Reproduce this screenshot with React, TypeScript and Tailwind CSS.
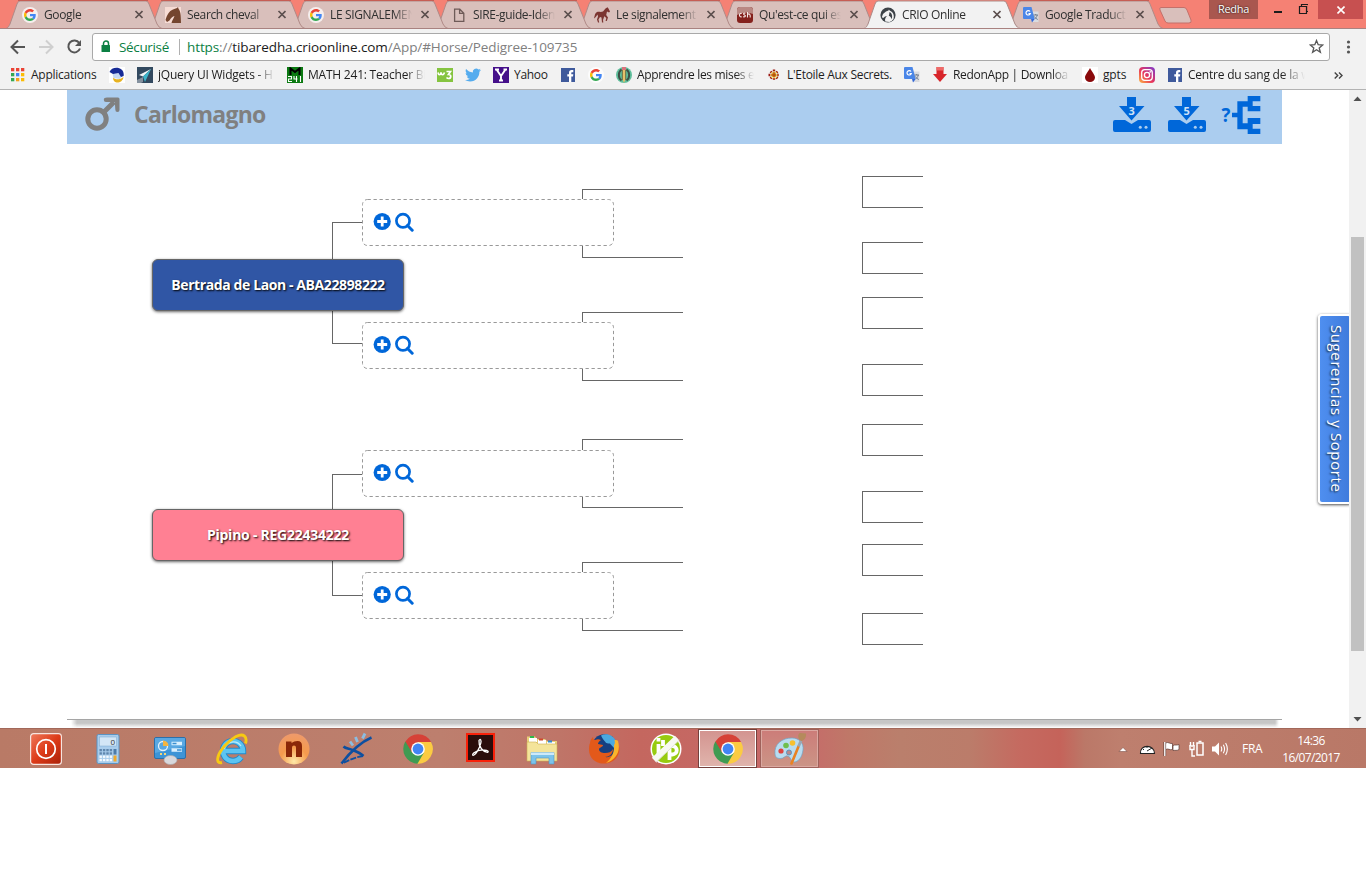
import React from 'react';

type P = { children?: React.ReactNode };

const Svg = ({ size = 16, box = '0 0 16 16', children }: P & { size?: number; box?: string }) => (
  <svg width={size} height={size} viewBox={box} className="block shrink-0">
    {children}
  </svg>
);

const GoogleIcon = () => (
  <Svg box="0 0 48 48">
    <circle cx="24" cy="24" r="24" fill="#fff" fillOpacity=".75" />
    <g transform="translate(6 6) scale(.75)">
      <path fill="#EA4335" d="M24 9.5c3.54 0 6.71 1.22 9.21 3.6l6.85-6.85C35.9 2.38 30.47 0 24 0 14.62 0 6.51 5.38 2.56 13.22l7.98 6.19C12.43 13.72 17.74 9.5 24 9.5z" />
      <path fill="#4285F4" d="M46.98 24.55c0-1.57-.15-3.09-.38-4.55H24v9.02h12.94c-.58 2.96-2.26 5.48-4.78 7.18l7.73 6c4.51-4.18 7.09-10.36 7.09-17.65z" />
      <path fill="#FBBC05" d="M10.53 28.59c-.48-1.45-.76-2.99-.76-4.59s.27-3.14.76-4.59l-7.98-6.19C.92 16.46 0 20.12 0 24s.92 7.54 2.56 10.78l7.97-6.19z" />
      <path fill="#34A853" d="M24 48c6.48 0 11.93-2.13 15.89-5.81l-7.73-6c-2.15 1.45-4.92 2.3-8.16 2.3-6.26 0-11.57-4.22-13.47-9.91l-7.98 6.19C6.51 42.62 14.62 48 24 48z" />
    </g>
  </Svg>
);

const HorseHeadIcon = () => (
  <Svg>
    <path fill="#f7dcd5" d="M0 0h16v16H0z" />
    <path fill="#74452f" d="M.5 13C2 8 4 4 8 2.500L12 1l1-1 .6 2C15.500 4 16 8 16 16H6.500C7 13 9 11 9.500 9 7.500 9.500 6 11 4.500 13.500L2 15z" />
  </Svg>
);
const PageIcon = () => (
  <Svg>
    <path fill="none" stroke="#6f5b58" strokeWidth="1.3" d="M3.6 2.2h5.2l4 4v8.2H3.6zM8.6 2.2v4.2h4" />
  </Svg>
);
const HorseIcon = () => (
  <Svg>
    <path
      fill="#7c3531"
      d="M11.500 1.500L13.500.3l.8 1L16 4.500l-1 1-2-1-.8 3.500 1.800 2.500-1.200 3.500h-1.200l.7-3-2-1.800L9 13l.3 2.500H8L7.500 10.500 6 10l-1.500 2.500.7 3H4L3 12.500 4 9.500 3.500 7.500C2.500 8.500 2 10.500 0 11.500.8 8 1 6 3 5c2-.5 4 .3 6-.5z"
    />
  </Svg>
);
const CshIcon = () => (
  <Svg>
    <rect width="16" height="16" rx="3" fill="#85211d" />
    <path fill="#b98883" d="M0 3Q0 0 3 0h10Q16 0 16 3v4Q8 3.500 0 8z" />
    <path fill="none" stroke="#f5e6e4" strokeWidth="1.100" d="M4.700 6.500C2 5.500 1.500 10.500 4.700 9.800M8.500 6.300c-2-.6-2.600.9-1 1.600s1 2.300-1.400 1.900M10.500 5v5.500M10.500 7.500c2-1.500 3 0 2.700 3" />
  </Svg>
);
const CrioIcon = () => (
  <Svg>
    <circle cx="8" cy="8" r="7.600" fill="#3c4247" />
    <path fill="#f2f2f2" d="M5.200 14.600C4.500 11.500 6 10 7.200 9L5 9.600 3.200 11l-1.400-.8L3 7 6 4.400l2.500-.8.4-1 1 1.100c3 1 4.800 4.300 3.600 8.300-1 1.600-2.500 2.500-4 2.900z" />
    <path fill="#3c4247" d="M9.500 5c2.300 1 3.300 4 2.200 7.200-.6-2-1.500-3-2.900-3.500l.4-1.500z" />
  </Svg>
);
const TranslateIcon = () => (
  <Svg>
    <path fill="#d9dbe0" d="M7 4.500h8.500V15H9z" />
    <path fill="#4a86e8" d="M1 0h7.500l3.200 12H1q-1 0-1-1V1q0-1 1-1z" />
    <path fill="#3367d6" d="M8 12h3.700L9 15.500z" />
    <path fill="none" stroke="#fff" strokeWidth="1.200" d="M7 4.500A2.200 2.200 0 1 0 7.300 6.500H5.500" />
    <path fill="none" stroke="#6b7686" strokeWidth=".9" d="M10.500 8h4.500M12.700 7v1M14.300 8c-.5 2-1.500 3-2.500 4M11.500 9.500c1 1.500 2 2.500 3.300 3" />
  </Svg>
);

const tabs: { title: string; icon: React.ReactNode; active?: boolean }[] = [
  { title: 'Google', icon: <GoogleIcon /> },
  { title: 'Search cheval', icon: <HorseHeadIcon /> },
  { title: 'LE SIGNALEMEN', icon: <GoogleIcon /> },
  { title: 'SIRE-guide-Iden', icon: <PageIcon /> },
  { title: 'Le signalement', icon: <HorseIcon /> },
  { title: "Qu'est-ce qui es", icon: <CshIcon /> },
  { title: 'CRIO Online', icon: <CrioIcon />, active: true },
  { title: 'Google Traduct', icon: <TranslateIcon /> },
];

const fade = '[mask-image:linear-gradient(to_right,#000_78%,transparent)]';

function Tab({ tab, z }: { tab: (typeof tabs)[number]; z: number }) {
  return (
    <div className="relative flex h-[29px] w-[143px] shrink-0 items-center pl-4" style={{ zIndex: tab.active ? 20 : z }}>
      <svg className="absolute top-0 left-0 overflow-visible" width="157" height="29">
        <path
          d="M0 28.500C2 28 3 26 4 24L11 4Q12 1 14 1H140Q142 1 143 4L151 24Q153 28 156 28.500Z"
          fill={tab.active ? '#f2f2f2' : '#d9bfbb'}
          stroke={tab.active ? '#ab8b88' : '#b08a87'}
        />
        {!tab.active && <path d="M12 .5H142" stroke="#c65d54" />}
        {tab.active && <path d="M1 28.500H155" stroke="#f2f2f2" strokeWidth="1.500" />}
      </svg>
      <div className="relative">{tab.icon}</div>
      <div
        className={`relative ml-[6px] w-[82px] overflow-hidden whitespace-nowrap text-[12px] leading-[16px] tracking-[-0.36px] text-[#303030] ${fade}`}
      >
        {tab.title}
      </div>
      <svg className="relative ml-[8px]" width="9" height="9" viewBox="0 0 9 9">
        <path d="M1.500 1l7 7M8.500 1l-7 7" stroke="#5c4f4e" strokeWidth="1.700" />
      </svg>
    </div>
  );
}

function TabStrip() {
  return (
    <div className="relative flex h-[29px] overflow-hidden border-b border-[#a98280] bg-[#f58174] pl-[6px]">
      {tabs.map((t, i) => (
        <Tab key={i} tab={t} z={10 - i} />
      ))}
      <svg className="mt-[7px] ml-[8px] shrink-0" width="36" height="17">
        <path d="M3 .5H26Q28 .5 29 3L33 13Q34 16 31 16H10Q8 16 7 14L2 3Q1 .5 3 .5Z" fill="#d9bfbb" stroke="#c4706a" />
      </svg>
      <div className="ml-[15px] h-[19px] w-[49px] shrink-0 bg-[#a9574f] text-center text-[11px] leading-[18px] tracking-[-0.3px] text-white [text-shadow:0_0_2px_#000]">
        Redha
      </div>
      <svg className="ml-[16px] shrink-0" width="34" height="19">
        <path d="M0 12h8" stroke="#1c1c1c" strokeWidth="2" />
        <path d="M25.500 6.500h7v7h-7zM27.500 6V4.500h7v7h-2" fill="none" stroke="#1c1c1c" strokeWidth="1.200" />
      </svg>
      <div className="ml-[10px] flex h-[19px] w-[45px] shrink-0 items-center justify-center bg-[#c75050]">
        <svg width="8" height="8">
          <path d="M.5 .5l7 7M7.500 .5l-7 7" stroke="#fff" strokeWidth="1.600" />
        </svg>
      </div>
    </div>
  );
}

function AddressBar() {
  return (
    <div className="flex h-[33px] items-center bg-[#f2f2f2] pt-[2px]">
      <svg width="92" height="24" viewBox="0 0 92 24" fill="none" strokeWidth="2">
        <path d="M11.500 12H25M18 5.500L11.500 12l6.500 6.500" stroke="#555" />
        <path d="M39 12H52.500M46 5.500l6.500 6.500-6.500 6.500" stroke="#cfcfcf" />
        <path d="M79.300 8A6 6 0 1 0 80 13.500" stroke="#555" />
        <path d="M81 5v6h-6z" fill="#555" />
      </svg>
      <div className="flex h-[28px] w-[1238px] items-center rounded-[3px] border border-[#a9a9a9] bg-white text-[14px] leading-[20px]">
        <svg className="ml-[8px]" width="10" height="13">
          <path d="M2.500 6V3.500a2.300 2.300 0 0 1 5 0V6" fill="none" stroke="#0b8043" strokeWidth="1.500" />
          <rect x=".5" y="5" width="8.500" height="7" rx=".5" fill="#0b8043" />
        </svg>
        <span className="ml-[8px] w-[52px] whitespace-nowrap text-[13.500px] tracking-[-0.35px] text-[#0b8043]">Sécurisé</span>
        <span className="ml-[8px] h-[16px] w-px bg-[#b0b0b0]" />
        <span className="ml-[7px] whitespace-nowrap text-[13.500px] tracking-[-0.1px] text-[#808080]">
          <span className="text-[#0b8043]">https</span>://<span className="text-[#1a1a1a]">tibaredha.crioonline.com</span>
          /App/#Horse/Pedigree-109735
        </span>
        <svg className="mr-[5px] ml-auto" width="15" height="15" viewBox="0 0 15 15">
          <path d="M7.500 1.500l1.700 4.200 4.500.3-3.500 2.900 1.200 4.400-3.900-2.500-3.900 2.500 1.200-4.400L1.300 6l4.500-.3z" fill="none" stroke="#555" strokeWidth="1.300" />
        </svg>
      </div>
      <svg className="ml-[16px]" width="5" height="14" fill="#555">
        <circle cx="2.500" cy="2" r="1.600" />
        <circle cx="2.500" cy="7" r="1.600" />
        <circle cx="2.500" cy="12" r="1.600" />
      </svg>
    </div>
  );
}

const FacebookIcon = () => (
  <Svg>
    <rect x="1" y="1" width="14" height="14" fill="#3f5a9c" />
    <path fill="#fff" d="M9 15V9.500H7.300V7.300H9V5.800C9 4 10 3.100 11.600 3.100h1.700v2.200h-1.100c-.7 0-.9.300-.9.900v1.100h2l-.3 2.200h-1.700V15z" />
  </Svg>
);

const longText = 'w-[117px] tracking-[-0.22px] [mask-image:linear-gradient(to_right,#000_84%,transparent)]';

const bookmarks: { icon: React.ReactNode; text?: string; cls?: string }[] = [
  {
    icon: (
      <Svg>
        {['#ea4335', '#ea4335', '#ea4335', '#34a853', '#4285f4', '#fbbc05', '#34a853', '#f4a11c', '#fbbc05'].map((c, i) => (
          <rect key={i} x={2 + (i % 3) * 5} y={1 + Math.floor(i / 3) * 5} width="3.300" height="3.300" fill={c} />
        ))}
      </Svg>
    ),
    text: 'Applications',
    cls: 'w-[67px] pl-px tracking-[-0.25px]',
  },
  {
    icon: (
      <Svg>
        <rect width="16" height="16" fill="#fff" />
        <path fill="#c6d8f2" d="M3.500 6.500l8-.5 2 3-3 3-6-1z" />
        <path fill="#172b96" d="M.5 5C2 .5 9-.5 12.500 2.500 14.500 4 15 7 14.600 9L12 10 9.500 6 4 7z" />
        <path fill="#e7b220" d="M4 10.500c2 2.500 7 2.500 10.500-.5-.5 4-4 6-7 5.500-2-.5-3.500-2-3.500-5z" />
      </Svg>
    ),
  },
  {
    icon: (
      <Svg>
        <rect width="16" height="16" fill="#32495f" />
        <path fill="#f2f6f8" d="M14 2L2 8l4 1.500z" />
        <path fill="#3bb3c9" d="M14 2L6 9.500 8 15z" />
        <path fill="#fff" d="M0 13L6 10v5l-2 1H0z" opacity=".4" />
      </Svg>
    ),
    text: 'jQuery UI Widgets - H',
    cls: longText,
  },
  {
    icon: (
      <Svg>
        <rect width="16" height="16" fill="#0b7a12" />
        <path fill="none" stroke="#000" strokeWidth="2" d="M3.500 8V1.500L8 5l4.500-3.500V8" />
        <path fill="none" stroke="#fff" strokeWidth="1.100" d="M1 9.500h3.500V12H1.500v2.500H5M7 9v3h3.500M9.500 9v6M13.500 9v6" />
      </Svg>
    ),
    text: 'MATH 241: Teacher Bi',
    cls: longText,
  },
  {
    icon: (
      <Svg>
        <rect y="1" width="16" height="14" fill="#85c440" />
        <path fill="none" stroke="#fff" strokeWidth="1.700" d="M1 5.500c.5 3 2.500 3 3 0 .5 3 2.500 3 3.500 0M9.500 4.500h4l-2 3c3 0 3 4 0 4-1 0-1.500-.5-2-1" />
      </Svg>
    ),
  },
  {
    icon: (
      <Svg box="0 0 24 24">
        <path
          fill="#55acee"
          d="M23.950 4.570a10 10 0 0 1-2.820.77 4.960 4.960 0 0 0 2.160-2.720c-.95.550-2 .950-3.130 1.180a4.920 4.920 0 0 0-8.380 4.480C7.690 8.090 4.070 6.130 1.640 3.160a4.820 4.820 0 0 0-.67 2.480c0 1.710.87 3.210 2.190 4.100a4.900 4.900 0 0 1-2.230-.620v.060a4.920 4.920 0 0 0 3.950 4.830 5 5 0 0 1-2.210.080 4.940 4.940 0 0 0 4.600 3.420A9.870 9.870 0 0 1 0 19.540a13.990 13.990 0 0 0 7.550 2.210c9.050 0 14-7.500 14-13.980 0-.21 0-.42-.02-.63a9.940 9.940 0 0 0 2.420-2.570z"
        />
      </Svg>
    ),
  },
  {
    icon: (
      <Svg>
        <rect width="16" height="16" fill="#45108a" />
        <path fill="none" stroke="#fff" strokeWidth="1.900" d="M3.500 2.500L8 9v5M12.500 2.500L8 9M2 2.500h4M10.500 2.500h3.500M6 13.500h4" />
      </Svg>
    ),
    text: 'Yahoo',
    cls: 'w-[34px] tracking-[-0.3px]',
  },
  { icon: <FacebookIcon /> },
  { icon: <GoogleIcon /> },
  {
    icon: (
      <Svg>
        <circle cx="8" cy="8" r="8" fill="#5fbf9c" />
        <path fill="none" stroke="#3d4f46" strokeWidth="2" d="M5.500 2.500C2 5 2 11 5.500 13.500M10.500 2.500C14 5 14 11 10.500 13.500" />
        <path fill="#5c6b4a" d="M5.800 2h4.400v11H5.800z" />
        <path fill="#e6c06a" d="M6.800 2h2.400v11L8 16l-1.200-3z" />
        <path fill="#d9737c" d="M6 0h4v3H6z" />
      </Svg>
    ),
    text: 'Apprendre les mises e',
    cls: 'w-[117px] tracking-[-0.32px] [mask-image:linear-gradient(to_right,#000_84%,transparent)]',
  },
  {
    icon: (
      <Svg>
        <path fill="none" stroke="#9c1a14" strokeWidth="2.400" d="M8 2.500v11M2.500 8h11M4.500 4.500l7 7M11.500 4.500l-7 7" strokeDasharray="1.800 1" />
        <path fill="none" stroke="#e8b81a" strokeWidth="1" d="M8 4v8M4 8h8M5 5l6 6M11 5l-6 6" />
        <rect x="7.200" y="7.200" width="1.600" height="1.600" fill="#9c1a14" />
      </Svg>
    ),
    text: "L'Etoile Aux Secrets.",
    cls: 'w-[105px] tracking-[-0.3px]',
  },
  { icon: <TranslateIcon /> },
  {
    icon: (
      <Svg>
        <path fill="#d8262b" d="M4.500 0h7v7H15l-7 8-7-8h3.500z" />
        <path fill="#ee6a68" d="M4.500 0h7v3.500h-7z" />
      </Svg>
    ),
    text: 'RedonApp | Downloa',
    cls: 'w-[117px] tracking-[-0.32px] [mask-image:linear-gradient(to_right,#000_84%,transparent)]',
  },
  {
    icon: (
      <Svg>
        <rect width="16" height="16" fill="#fff" />
        <path fill="#8a0a0c" d="M8 1c2 4 5 7 5 9.500a5 4.500 0 0 1-10 0C3 8 6 5 8 1z" />
      </Svg>
    ),
    text: 'gpts',
    cls: 'w-[24px] tracking-[-0.15px]',
  },
  {
    icon: (
      <Svg>
        <defs>
          <linearGradient id="ig" x1="0" y1="1" x2="1" y2="0">
            <stop offset="0" stopColor="#fdb840" />
            <stop offset=".45" stopColor="#e8355c" />
            <stop offset="1" stopColor="#7a3bd0" />
          </linearGradient>
        </defs>
        <rect width="16" height="16" rx="4" fill="url(#ig)" />
        <g fill="none" stroke="#fff" strokeWidth="1.300">
          <rect x="2.700" y="2.700" width="10.600" height="10.600" rx="3" />
          <circle cx="8" cy="8" r="2.600" />
        </g>
        <circle cx="11.200" cy="4.900" r=".8" fill="#fff" />
      </Svg>
    ),
  },
  {
    icon: <FacebookIcon />,
    text: 'Centre du sang de la w',
    cls: 'w-[117px] tracking-[-0.22px] [mask-image:linear-gradient(to_right,#000_80%,transparent)]',
  },
];

function BookmarksBar() {
  return (
    <div className="flex h-[28px] items-center gap-3 border-b border-[#b3b3b3] bg-[#f2f2f2] pb-px pl-[9px] text-[12px] leading-[16px] text-[#1e1e1e]">
      {bookmarks.map((b, i) => (
        <div key={i} className="flex shrink-0 items-center gap-[5px]">
          {b.icon}
          {b.text && <span className={`block overflow-hidden whitespace-nowrap ${b.cls}`}>{b.text}</span>}
        </div>
      ))}
      <svg className="ml-[17px]" width="9" height="7" viewBox="0 0 9 7">
        <path d="M.7 .5l3 3-3 3M5 .5l3 3-3 3" fill="none" stroke="#444" strokeWidth="1.400" />
      </svg>
    </div>
  );
}

const Download = ({ n }: { n: string }) => (
  <svg width="38" height="37" viewBox="0 0 38 37" fill="#0067d9">
    <path d="M14 1h9v9h8.500L18.500 24.500 6 10h8z" />
    <path d="M2 24h10l6.500 4 6.500-4h11q2 0 2 2v8q0 2-2 2H2q-2 0-2-2v-8q0-2 2-2z" />
    <circle cx="27.300" cy="31.200" r="1.500" fill="#abcdef" />
    <circle cx="33" cy="31.200" r="1.500" fill="#abcdef" />
    <text x="18.700" y="18.800" textAnchor="middle" fontSize="11" fontWeight="700" fill="#cfe2f7">
      {n}
    </text>
  </svg>
);

function HeaderBand() {
  return (
    <div className="ml-[67px] flex h-[54px] w-[1215px] items-center bg-[#abcdef]">
      <svg className="mt-[-6px] ml-[18px]" width="36" height="36" viewBox="0 0 36 36">
        <circle cx="12" cy="23" r="9.200" fill="none" stroke="#808080" strokeWidth="5" />
        <path d="M18.500 16.500L29 6" stroke="#808080" strokeWidth="5" />
        <path d="M22 1.500h11q1.500 0 1.500 1.500v11q0 2-2 2-2.200 0-2.200-2.500L29.800 6H21q-2.200 0-2.200-2.200Q18.800 1.500 22 1.500z" fill="#808080" />
      </svg>
      <h1 className="mt-[-6px] ml-[13px] whitespace-nowrap text-[23px] leading-[30px] font-bold tracking-[-0.75px] text-[#808080]">
        Carlomagno
      </h1>
      <div className="mt-[-5px] mr-[21px] ml-auto flex items-center">
        <Download n="3" />
        <div className="w-[17px]" />
        <Download n="5" />
        <svg className="ml-[14px]" width="41" height="40" viewBox="962 285 123 120">
          <path
            fill="#0067d9"
            d="M1045 288h38v16h-23v14h23v16h-38v-14h-15v50h15v-16h38v18h-23v14h23v16h-38v-14h-31v-36h-16v-14h16v-34h31z"
          />
          <text x="980" y="366" textAnchor="middle" fontSize="56" fontWeight="700" fill="#0067d9">
            ?
          </text>
        </svg>
      </div>
    </div>
  );
}

const ActionIcons = () => (
  <svg className="mt-[-2px]" width="42" height="20" viewBox="0 0 42 20">
    <circle cx="9.200" cy="9.500" r="8.600" fill="#0067d9" />
    <path d="M9.200 4.500v10M4.200 9.500h10" stroke="#fff" strokeWidth="2.800" />
    <circle cx="30" cy="8.800" r="6.600" fill="none" stroke="#0067d9" strokeWidth="2.700" />
    <path d="M34.500 13.500l4.700 4.700" stroke="#0067d9" strokeWidth="3" strokeLinecap="round" />
  </svg>
);

const levelTwo = ['top-[109px]', 'top-[232px]', 'top-[360px]', 'top-[482px]'];
const brackets: [number, number][] = [
  [86, 117], [152, 183], [207, 238], [274, 305], [334, 365], [401, 432], [454, 485], [523, 554],
];

function Pedigree() {
  return (
    <>
      <svg className="absolute top-0 left-0" width="1349" height="638" fill="none" stroke="#666" shapeRendering="crispEdges">
        <path d="M362 132.500H332.500V253.500H362M362 384.500H332.500V505.500H362" />
        <path d="M683 99.500H582.500V167.500H683M683 222.500H582.500V290.500H683M683 349.500H582.500V417.500H683M683 472.500H582.500V540.500H683" />
        {brackets.map(([a, b]) => (
          <path key={a} d={`M923 ${a + 0.5}H862.5V${b + 0.5}H923`} />
        ))}
      </svg>
      {levelTwo.map((top) => (
        <div key={top} className={`absolute left-[362px] flex h-[47px] w-[252px] items-center rounded-[5px] bg-white pl-[11px] ${top}`}>
          <svg className="absolute top-0 left-0" width="252" height="47">
            <rect x=".5" y=".5" width="251" height="46" rx="5" fill="none" stroke="#999" strokeDasharray="3.300 2.700" />
          </svg>
          <ActionIcons />
        </div>
      ))}
      <div className="absolute top-[169px] left-[152px] flex h-[52px] w-[252px] items-center justify-center rounded-[6px] border border-[#666] bg-[#3056a5] pb-[2px] text-[14px] font-bold whitespace-nowrap text-white shadow-[0_1px_3px_rgba(0,0,0,0.6)] [text-shadow:1px_1px_2px_#000]">
        <span className="tracking-[-0.4px]">Bertrada de Laon - ABA22898222</span>
      </div>
      <div className="absolute top-[419px] left-[152px] flex h-[52px] w-[252px] items-center justify-center rounded-[6px] border border-[#666] bg-[#ff8093] pb-[2px] text-[14px] font-bold whitespace-nowrap text-white shadow-[0_1px_3px_rgba(0,0,0,0.6)] [text-shadow:1px_1px_2px_#000]">
        <span className="tracking-[-0.25px]">Pipino - REG22434222</span>
      </div>
    </>
  );
}

function Scrollbar() {
  return (
    <div className="flex h-[638px] w-[17px] flex-col items-center bg-[#f1f1f1]">
      <svg width="17" height="17">
        <path d="M4.500 11h8l-4-4.500z" fill="#505050" />
      </svg>
      <div className="mt-[130px] h-[414px] w-[13px] bg-[#c1c1c1]" />
      <svg className="mt-auto" width="17" height="17">
        <path d="M4.500 6h8l-4 4.500z" fill="#505050" />
      </svg>
    </div>
  );
}

function Page() {
  return (
    <div className="flex h-[638px]">
      <div className="relative flex h-full w-[1349px] flex-col overflow-hidden bg-white">
        <HeaderBand />
        <Pedigree />
        <div className="mt-auto ml-[67px] h-[9px] w-[1215px]">
          <div className="h-px bg-[#a5a5a5]" />
          <div className="mr-[3px] ml-[4px] h-[8px] bg-linear-to-b from-[#c6c6c6] from-40% to-white [mask-image:linear-gradient(to_right,transparent,#000_6px,#000_calc(100%-4px),transparent)]" />
        </div>
        <div className="absolute top-[224px] right-[-3px] flex h-[190px] w-[34px] items-center justify-center rounded-[4px] border-2 border-white bg-linear-to-r from-[#4f8ff0] to-[#3f7bdc] pl-[3px] shadow-[0_1px_3px_rgba(0,0,0,0.7)]">
          <span className="whitespace-nowrap text-[15px] leading-[20px] tracking-[0.6px] text-white [text-shadow:1px_1px_2px_#123] [writing-mode:vertical-rl]">
            Sugerencias y Soporte
          </span>
        </div>
      </div>
      <Scrollbar />
    </div>
  );
}

const ChromeIcon = () => (
  <Svg size={30} box="0 0 30 30">
    <path fill="#fbcb43" d="M15 15V8H28A14.700 14.700 0 0 1 14 29.700z" />
    <path fill="#3f9b52" d="M15 15l-.5 14.700A14.700 14.700 0 0 1 2.300 7.500z" />
    <path fill="#3f9b52" d="M21 18.500l-6.500 11.200-4-9z" />
    <path fill="#d64137" d="M2.400 7.500L9 18.500l6-10.500H28Q24 .5 15 .3 7 .5 2.400 7.500z" />
    <circle cx="15" cy="15" r="6.800" fill="#fff" />
    <circle cx="15" cy="15" r="5.400" fill="#4285f4" />
  </Svg>
);

const launchers: React.ReactNode[] = [
  <Svg key="power" size={32} box="0 0 32 32">
    <defs>
      <linearGradient id="pw" x1="0" y1="0" x2="1" y2="1">
        <stop offset="0" stopColor="#ef7a5c" />
        <stop offset=".5" stopColor="#dd3b18" />
        <stop offset="1" stopColor="#a92008" />
      </linearGradient>
    </defs>
    <rect x=".6" y=".6" width="30.800" height="30.800" rx="3" fill="url(#pw)" stroke="#f7e5e0" strokeWidth="1.200" />
    <circle cx="16" cy="16" r="9.300" fill="none" stroke="#fff" strokeWidth="1.700" />
    <path d="M16 11v10" stroke="#fff" strokeWidth="2" />
  </Svg>,
  <Svg key="calc" size={30} box="0 0 30 30">
    <rect x="4" y=".5" width="22" height="29" rx="1.500" fill="#a9cdec" stroke="#5b93c2" />
    <rect x="6.500" y="3" width="17" height="9" fill="#d3e6f6" stroke="#7aa9cf" strokeWidth=".5" />
    <text x="22" y="10.500" textAnchor="end" fontSize="8" fill="#333">0</text>
    {[0, 1, 2, 3, 4, 5, 6, 7, 8, 9, 10, 11, 12, 13, 14, 15].map((i) => (
      <rect key={i} x={6.500 + (i % 4) * 3.400} y={15 + Math.floor(i / 4) * 3.300} width="2.400" height="2.300" fill={i < 8 ? '#5f86ad' : '#f5fafe'} />
    ))}
    <rect x="20.500" y="15" width="3" height="5.500" fill="#4c7ba8" />
    <rect x="20.500" y="21.500" width="3" height="6" fill="#f0a92c" />
  </Svg>,
  <Svg key="panel" size={32} box="0 0 32 32">
    <rect x=".5" y="4.500" width="31" height="21" rx="1.500" fill="#3d94d6" stroke="#2c6fa8" />
    <path d="M1 5h30v8L1 20z" fill="#6db5ea" opacity=".6" />
    <circle cx="9" cy="13" r="4.500" fill="none" stroke="#e4f2fc" strokeWidth="1.300" />
    <path d="M9 13V7.500A5.500 5.500 0 0 1 14.500 13z" fill="#f4b540" />
    <path d="M17.500 10.500h10.500M17.500 17h10.500" stroke="#d9f0ff" strokeWidth="3.300" />
    <path d="M18.500 10.500h4M23 17h4.500" stroke="#3a8fd0" strokeWidth="1.500" />
    <path d="M6 21h2M10 21h2" stroke="#f4d67a" strokeWidth="2" />
    <ellipse cx="16.500" cy="27" rx="6.500" ry="4.500" fill="#d8d8dc" stroke="#a9a9ae" strokeWidth=".6" />
  </Svg>,
  <Svg key="ie" size={32} box="0 0 32 32">
    <path fill="none" stroke="#2389c9" strokeWidth="6.400" d="M7.500 18H27A10 10 0 1 0 25 24" />
    <path fill="none" stroke="#5cc4f2" strokeWidth="4.600" d="M7.500 18H27A10 10 0 1 0 25 24" />
    <path fill="none" stroke="#b9ecfd" strokeWidth="1.300" d="M8 16A9.500 9.500 0 0 1 25 13" />
    <path fill="none" stroke="#f7c913" strokeWidth="2.900" d="M29.500 10.500C31.500 4 28-.3 20 3.500 12 8 4 17 2 24c-1 4 0 6.500 4 5.500" />
  </Svg>,
  <Svg key="n" size={32} box="0 0 32 32">
    <defs>
      <radialGradient id="ng" cx=".5" cy=".9" r=".9">
        <stop offset="0" stopColor="#ffe9a8" />
        <stop offset=".5" stopColor="#f59a4c" />
        <stop offset="1" stopColor="#ee9a6c" />
      </radialGradient>
    </defs>
    <circle cx="16" cy="16" r="15.500" fill="url(#ng)" />
    <path d="M8 8.500h5.500V10Q16 8 19.500 8q4.500 0 4.500 5v11h-6V14.500q0-2-2-2-2 0-2 2V24H8z" fill="#8a2708" />
  </Svg>,
  <Svg key="x" size={34} box="0 0 34 34">
    <path fill="none" stroke="#0d4fa0" strokeWidth="2.500" d="M32.500 5.500C22 10 12 19 2.500 31.500M4.500 14.500c2 2 5 2 9 3.500s8 3 11 6" />
    <path fill="none" stroke="#0d4fa0" strokeWidth="1.800" strokeDasharray="6 1.200" d="M24 24c-7 1-14 4-21 7.500" />
    <path stroke="#8bbde2" strokeWidth="2.800" d="M16.500 5l2 5M11 9.500l3 4M26 1.500l-2.500 5" />
  </Svg>,
  <ChromeIcon key="c1" />,
  <div key="pdf" className="pb-[3px]">
    <Svg size={29} box="0 0 29 29">
      <rect x="1" y="1" width="27" height="27" fill="#2a0d0b" stroke="#f8210a" strokeWidth="2" />
      <path
        fill="none"
        stroke="#fff"
        strokeWidth="1.300"
        d="M13 7.500c1.200-2.300 2.600-.5 1.800 2.700C13.600 15 10.500 20.500 8 22c-1.800 1-1.800-.8 0-2.200 3.300-2.500 8.700-3.300 12.500-2.500 2.300.5 2.100 2.200.3 1.900-3.800-.5-8.500-5.700-7.800-11.700z"
      />
    </Svg>
  </div>,
  <Svg key="files" size={32} box="0 0 32 32">
    <path fill="#e6cf7a" d="M1 6V3.500h8L11 6h8l2 2h10v20H1z" />
    <path fill="#fff" d="M3 5h8v4H3zM12 7h8v4h-8zM21 9h8v4h-8z" />
    <path fill="#2eb84a" d="M4 3h4v2H4z" />
    <path fill="#d04a2e" d="M13 5.500h4v2h-4z" />
    <path fill="#2e8bd0" d="M22 7.500h4v2h-4z" />
    <path fill="#f4e49a" stroke="#cfae50" strokeWidth=".6" d="M1 9h9l2 2h19v17H1z" />
    <path fill="#7cc3ea" stroke="#4e93c4" strokeWidth=".6" d="M5 31V19.500h23V31h-5v-6H10v6z" />
    <path fill="#cdeafa" d="M5 19.500h23v2.500H5z" />
  </Svg>,
  <Svg key="ff" size={32} box="0 0 32 32">
    <circle cx="16.500" cy="14" r="12.700" fill="#163f80" />
    <path fill="#4aa9e0" d="M13 2.500c5-3 13-.5 15 6 1 3 0 7-1 9-1-4-3-4-5-7-2 0-4 0-5-2-2-2-3-4-4-6z" />
    <path fill="#e3591a" d="M2 10c0-3 2-5 3-6 0 2 1 3 2 3 2-1 4-1 6 0-2 1-3 3-3 4l5 1c0 2-3 2-4 4 0 3 3 4 6 4 4 0 6-1 8-4 0 5-4 8-8 8 6 1 10-4 11-9l1-6c2 2 2.500 5 2.500 8-1 8-7 13.500-15 13.500C8 31 1 25 1 17c0-3 0-5 1-7z" />
    <path fill="#f9b52c" d="M30 8c3 10-2 19-12 22 6-5 8.500-11 8-18 1-1 1-3 .500-5 2 0 3 0 3.500 1z" />
  </Svg>,
  <Svg key="ip" size={32} box="0 0 32 32">
    <circle cx="16" cy="16" r="15.500" fill="#fff" />
    <circle cx="16" cy="16" r="14" fill="#97cb10" />
    <path fill="none" stroke="#fff" strokeWidth="3.800" d="M8.500 5v3.500M8.500 11v11M19.500 27V13h3a4 4 0 0 1 0 8.500h-3M13 7v6" />
    <path stroke="#f7f8f3" strokeWidth="6" d="M4 27L27 5" />
    <path stroke="#d7dccb" strokeWidth=".8" d="M6 29.500L29.500 7" />
  </Svg>,
];

const PaintIcon = () => (
  <Svg size={34} box="0 0 34 34">
    <path fill="#b9dcf0" stroke="#6fa6c8" strokeWidth=".7" d="M2 22C1 12 9 6 19 6c7 0 12 5 11 12-1 8-5 12-9 12-3 0-3-5-6-6s-4 3-8 2.500C4 26.500 2 25 2 22z" />
    <circle cx="8" cy="19" r="2.600" fill="#e0443e" />
    <circle cx="13" cy="13.500" r="2.800" fill="#6fbf4f" />
    <circle cx="19.500" cy="11" r="2.800" fill="#f7c02f" />
    <circle cx="16" cy="20.500" r="2.500" fill="#b98a8c" stroke="#5d93bd" />
    <path stroke="#e98222" strokeWidth="2.600" strokeLinecap="round" d="M18.500 31.500l7-17" />
    <path stroke="#9aa7b3" strokeWidth="2.800" d="M25.500 14.500l2.500-6" />
    <path fill="#b58a5c" d="M26.500 8C24.500 5 25 1.500 27 1l6 .5c.5 4-1.500 6.500-4.500 7.500z" />
  </Svg>
);

function Taskbar() {
  return (
    <div className="flex h-[40px] items-center border-t border-[#a2685a] bg-[linear-gradient(to_right,#b97a66_0,#bd7f6e_440px,#bf7568_560px,#c4675f_640px,#c7696a_800px,#bf7868_850px,#ba7f6c_900px,#bb7c6a_970px,#c56a60_1020px,#c5635a_1060px,#bb7868_1085px,#be7f6e_1120px,#b97867_1366px)] pl-[15px] text-[12px] text-white">
      {launchers.map((l, i) => (
        <div key={i} className="flex w-[62px] justify-center">
          {l}
        </div>
      ))}
      <div className="ml-[1px] flex h-[39px] w-[59px] items-center justify-center border border-[#74403c] bg-white">
        <div className="flex h-[35px] w-[55px] items-center justify-center bg-linear-to-b from-[#d39490] to-[#e0b4ac]">
          <ChromeIcon />
        </div>
      </div>
      <div className="ml-[3px] flex h-[39px] w-[59px] items-center justify-center border border-[#9f615a]">
        <div className="flex h-[37px] w-[57px] items-center justify-center border border-[#dba8a1] bg-linear-to-b from-[#cc7d79] to-[#cb9486]">
          <PaintIcon />
        </div>
      </div>
      <svg className="ml-[299px]" width="110" height="20" viewBox="0 0 110 20">
        <path d="M1 12.500h8l-4-4z" fill="#fff" stroke="#6d4038" strokeWidth=".5" />
        <path d="M22.500 14.500C21.500 5 36.500 5 36.500 14.500z" fill="#fff" stroke="#222" strokeWidth="1.200" />
        <path d="M29 12l5-3M25 11l1-1M29 8v1" stroke="#222" />
        <path d="M47.500 4c3-1.500 4 1 7 .5v6c-3 1-4-1.500-7 0zM55 6.500c2-1 4 0 6-1v5c-2 1.500-4 .5-6 1z" fill="#fff" stroke="#5d3a33" strokeWidth=".7" />
        <path d="M46.800 3v14" stroke="#5d3a33" strokeWidth="2.600" />
        <path d="M46.800 3v14" stroke="#fff" strokeWidth="1.400" />
        <rect x="79" y="4" width="6" height="12" fill="none" stroke="#fff" strokeWidth="1.500" />
        <path d="M80.500 2.500h3M71 7h6M72.500 3v4M75.500 3v4M72 8v2.500h4V8M74 10v7h3" fill="none" stroke="#fff" strokeWidth="1.400" />
        <path d="M94 7.500h3l4-4v13l-4-4h-3z" fill="#fff" />
        <path d="M103 7.500q1.500 2.500 0 5M105.300 5.700q2.500 4.300 0 8.600M107.600 4q3.500 6 0 12" fill="none" stroke="#fff" strokeWidth="1.100" />
      </svg>
      <span className="ml-[14px] w-[22px] whitespace-nowrap tracking-[-0.3px]">FRA</span>
      <div className="ml-[14px] w-[66px] text-center leading-[17px] tracking-[-0.6px] whitespace-nowrap">
        <div>14:36</div>
        <div>16/07/2017</div>
      </div>
    </div>
  );
}

export default function App() {
  return (
    <div className="flex h-[894px] w-[1366px] flex-col overflow-hidden bg-white font-['Open_Sans','Noto_Sans',sans-serif]">
      <TabStrip />
      <AddressBar />
      <BookmarksBar />
      <Page />
      <Taskbar />
    </div>
  );
}
